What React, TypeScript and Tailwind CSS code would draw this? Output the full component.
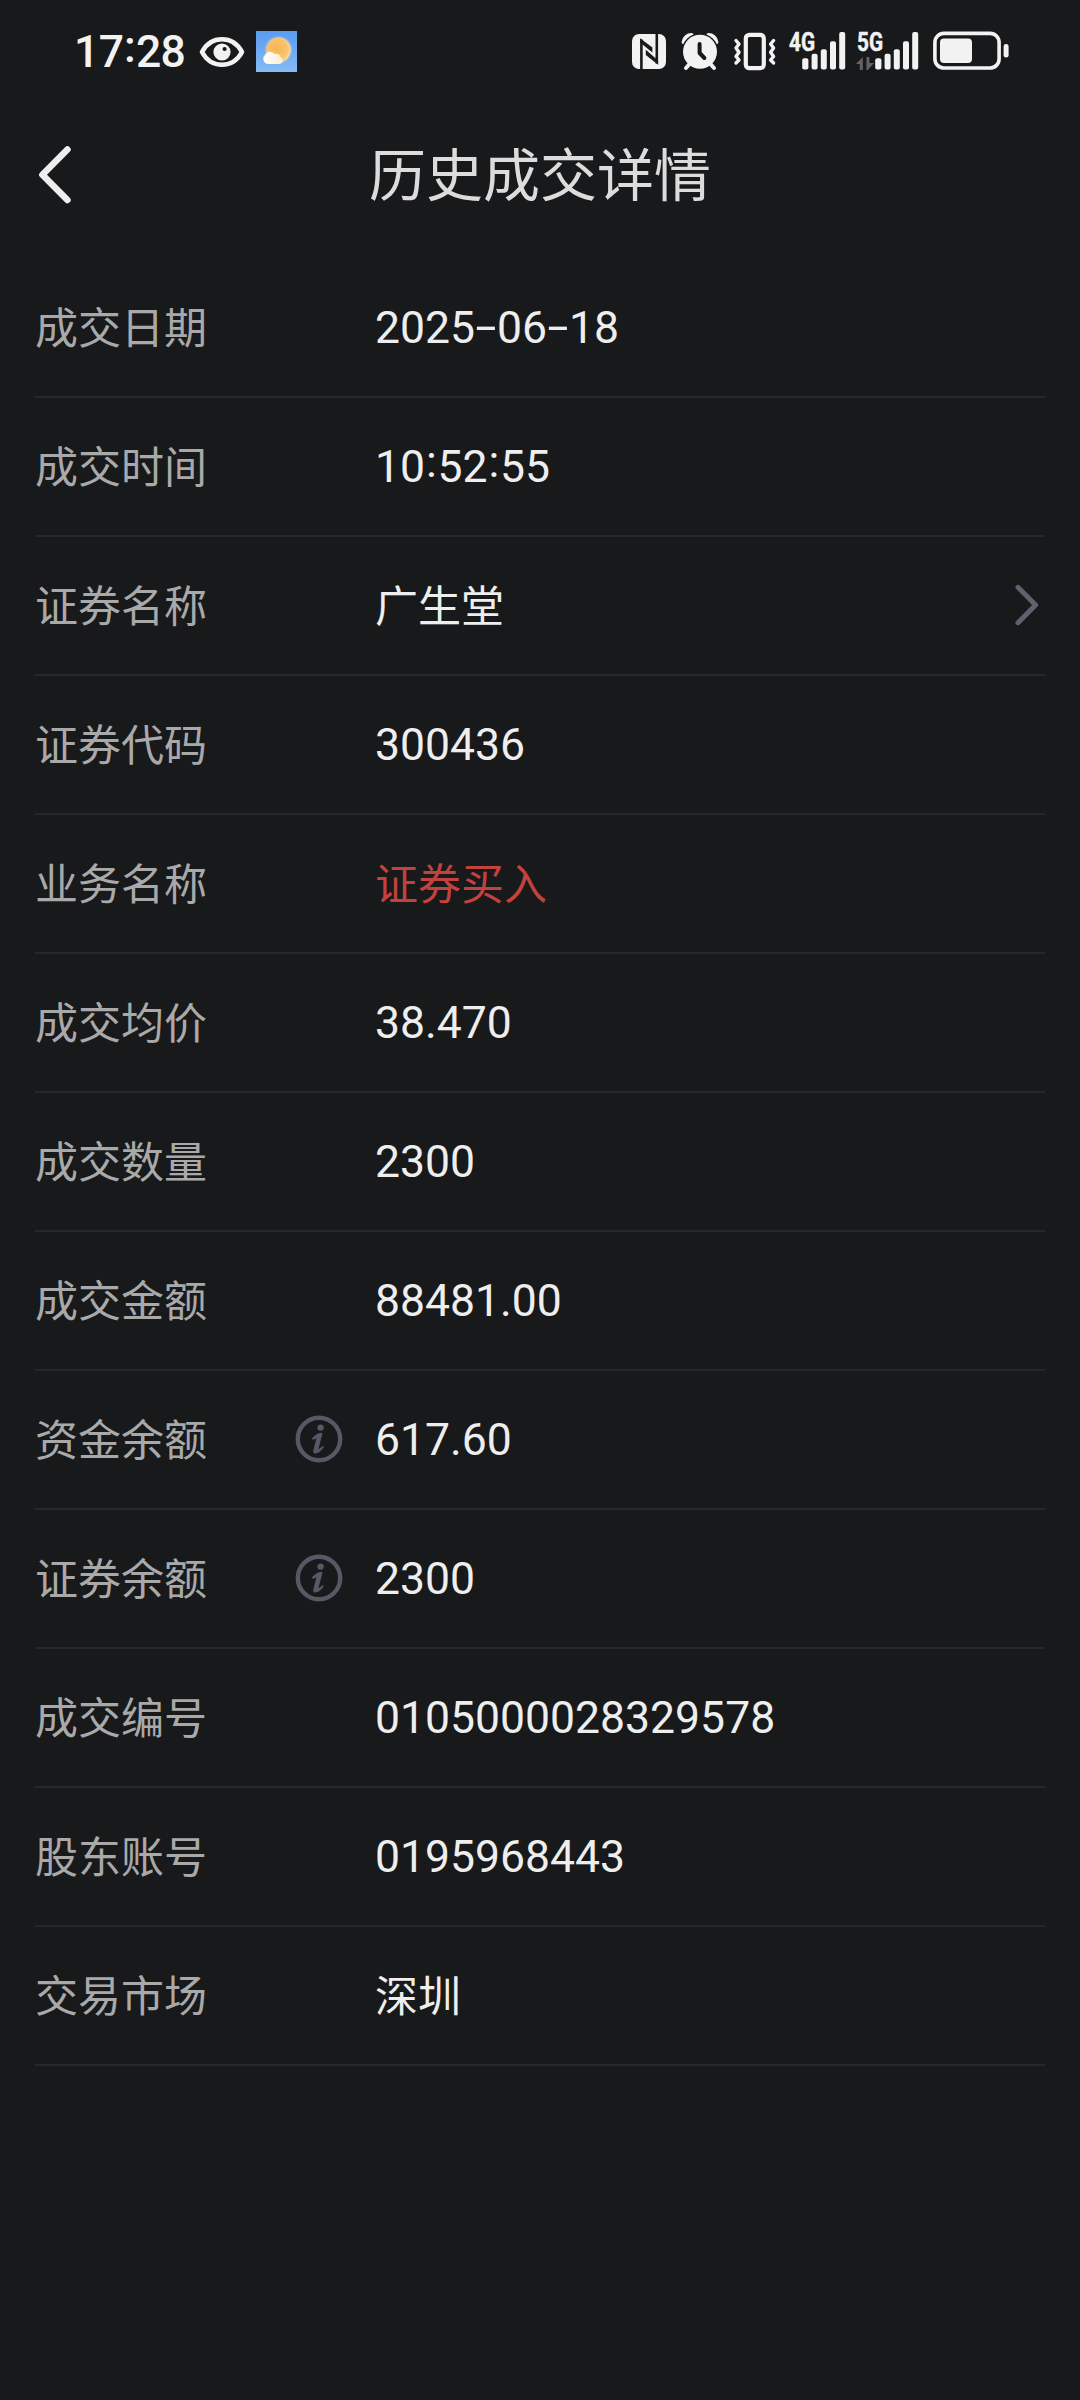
import { Fragment } from "react";
import clsx from "clsx";

type Row = {
  label: string;
  value: string;
  info?: boolean;
  link?: boolean;
  tone?: "buy";
};

const ROWS: Row[] = [
  { label: "成交日期", value: "2025-06-18" },
  { label: "成交时间", value: "10:52:55" },
  { label: "证券名称", value: "广生堂", link: true },
  { label: "证券代码", value: "300436" },
  { label: "业务名称", value: "证券买入", tone: "buy" },
  { label: "成交均价", value: "38.470" },
  { label: "成交数量", value: "2300" },
  { label: "成交金额", value: "88481.00" },
  { label: "资金余额", value: "617.60", info: true },
  { label: "证券余额", value: "2300", info: true },
  { label: "成交编号", value: "0105000028329578" },
  { label: "股东账号", value: "0195968443" },
  { label: "交易市场", value: "深圳" },
];

// Dashes are drawn wider and colons raised to the middle of the digits.
function Figures({ text }: { text: string }) {
  return (
    <>
      {text.split(/([-:])/).map((part, i) => {
        if (part === "-") {
          return (
            <span key={i} className="inline-block w-[22px] -translate-y-px scale-x-[1.7] text-center">
              -
            </span>
          );
        }
        if (part === ":") {
          return (
            <span key={i} className="inline-block w-[12.5px] -translate-y-[5px] text-center">
              :
            </span>
          );
        }
        return <Fragment key={i}>{part}</Fragment>;
      })}
    </>
  );
}

function EyeIcon() {
  return (
    <svg className="h-[44px] w-[46px]" viewBox="0 0 46 44" fill="none">
      <path
        d="M3 23 C7 15.5 14 10.3 23 10.3 C32 10.3 39 15.5 43 23 C39 30.5 32 35.7 23 35.7 C14 35.7 7 30.5 3 23 Z"
        stroke="#f2f2f2"
        strokeWidth="4.6"
        strokeLinejoin="round"
      />
      <circle cx="23" cy="23" r="8.6" fill="#f2f2f2" />
      <circle cx="25.6" cy="20" r="2.1" fill="#18191b" />
    </svg>
  );
}

function WeatherIcon() {
  return (
    <svg className="h-[41px] w-[41px]" viewBox="0 0 41 41">
      <defs>
        <linearGradient id="sky" x1="0" y1="0" x2="0" y2="1">
          <stop offset="0" stopColor="#5b9cf0" />
          <stop offset="1" stopColor="#86baf4" />
        </linearGradient>
        <radialGradient id="sun" cx="0.4" cy="0.45" r="0.65">
          <stop offset="0" stopColor="#f6b455" />
          <stop offset="0.7" stopColor="#fbc46c" />
          <stop offset="1" stopColor="#fde3a4" />
        </radialGradient>
        <linearGradient id="cloud" x1="0" y1="0" x2="1" y2="0">
          <stop offset="0" stopColor="#ffffff" />
          <stop offset="1" stopColor="#fdecd2" />
        </linearGradient>
      </defs>
      <rect width="41" height="41" fill="url(#sky)" />
      <circle cx="22.5" cy="18.8" r="13.4" fill="#fde9b8" opacity="0.35" />
      <circle cx="22.5" cy="18.8" r="12.2" fill="url(#sun)" />
      <path
        d="M12.5 33 A5.2 5.2 0 0 1 9 24 A5.6 5.6 0 0 1 18.5 23 A5.2 5.2 0 0 1 25 26.4 A3.5 3.5 0 0 1 23.5 33 Z"
        fill="url(#cloud)"
      />
    </svg>
  );
}

function NfcIcon() {
  return (
    <svg className="h-[44px] w-[34px]" viewBox="0 0 34 44">
      <rect y="5" width="34" height="35" rx="7" fill="#f2f2f2" />
      <path d="M9.4 40.5 V10.5" stroke="#18191b" strokeWidth="2.6" />
      <path d="M24.8 4.5 V34.5" stroke="#18191b" strokeWidth="2.6" />
      <path d="M8.1 9.2 L20.4 18.4 V23.6 L8.1 13.6 Z" fill="#18191b" />
      <path d="M26.1 35.8 L13.8 26 V20.8 L26.1 31.4 Z" fill="#18191b" />
    </svg>
  );
}

function AlarmIcon() {
  return (
    <svg className="h-[44px] w-[38px]" viewBox="0 0 38 44" fill="none" strokeLinecap="round">
      <path d="M2.8 13 C3.4 9 6.5 6.2 10.5 6.2" stroke="#f2f2f2" strokeWidth="4.4" />
      <path d="M35.2 13 C34.6 9 31.5 6.2 27.5 6.2" stroke="#f2f2f2" strokeWidth="4.4" />
      <circle cx="19" cy="22.8" r="18.4" fill="#18191b" />
      <path d="M8.5 35 L5 39 M29.5 35 L33 39" stroke="#f2f2f2" strokeWidth="4" />
      <circle cx="19" cy="22.8" r="17" fill="#f2f2f2" />
      <path d="M18.6 15 V24 L23.4 29" stroke="#18191b" strokeWidth="4" strokeLinejoin="round" />
    </svg>
  );
}

function VibrateIcon() {
  return (
    <svg
      className="h-[44px] w-[44px]"
      viewBox="0 0 44 44"
      fill="none"
      stroke="#f2f2f2"
      strokeLinecap="round"
      strokeLinejoin="round"
    >
      <rect x="12.8" y="5.8" width="18" height="33.4" rx="3.6" strokeWidth="4.2" />
      <path d="M3 11.5 L6 15 L3 19 L6 23.2 L3 27.4 L6 31 L3 34" strokeWidth="3.4" />
      <path d="M40.6 11.5 L37.6 15 L40.6 19 L37.6 23.2 L40.6 27.4 L37.6 31 L40.6 34" strokeWidth="3.4" />
    </svg>
  );
}

function SignalBars() {
  return (
    <>
      <rect x="0.2" y="29.2" width="6.2" height="11.3" rx="2" />
      <rect x="9.6" y="24.8" width="6" height="15.7" rx="2" />
      <rect x="18.8" y="20.2" width="6" height="20.3" rx="2" />
      <rect x="28" y="12.2" width="6" height="28.3" rx="2" />
      <rect x="37.2" y="3" width="6" height="37.5" rx="2" />
    </>
  );
}

function NetworkLabel({ children }: { children: string }) {
  return (
    <text
      x="1"
      y="21.6"
      className="font-['Roboto',sans-serif] text-[25.5px] font-bold"
      stroke="#f2f2f2"
      strokeWidth="0.5"
      textLength="26"
      lengthAdjust="spacingAndGlyphs"
    >
      {children}
    </text>
  );
}

function Signal4G() {
  return (
    <svg className="h-[64px] w-[59px]" viewBox="0 -10 59 64" fill="#f2f2f2">
      <NetworkLabel>4G</NetworkLabel>
      <g transform="translate(14 0)">
        <SignalBars />
      </g>
    </svg>
  );
}

function Signal5G() {
  return (
    <svg className="h-[64px] w-[64px]" viewBox="0 -10 64 64" fill="#f2f2f2">
      <NetworkLabel>5G</NetworkLabel>
      <path d="M0 35 L6.8 28 V41 H3.8 V35 Z M10.4 28 H13.4 V34 H18 L11.8 41 H10.4 Z" fill="#626365" />
      <g transform="translate(19 0)">
        <SignalBars />
      </g>
    </svg>
  );
}

function BatteryIcon() {
  return (
    <svg className="h-[44px] w-[76px]" viewBox="0 0 76 44">
      <rect x="1.9" y="4.4" width="64.2" height="34.6" rx="9" fill="none" stroke="#f2f2f2" strokeWidth="3.6" />
      <rect x="7" y="9.4" width="32" height="24.6" rx="4" fill="#f2f2f2" />
      <rect x="70.6" y="15" width="5" height="13.6" rx="2.4" fill="#f2f2f2" />
    </svg>
  );
}

function InfoIcon() {
  return (
    <svg className="mb-px h-[48px] w-[48px]" viewBox="0 0 48 48" fill="none">
      <circle cx="24" cy="24" r="21.2" stroke="#545966" strokeWidth="4.4" />
      <circle cx="25.6" cy="12.6" r="3.2" fill="#545966" />
      <path
        d="M17 23.2 C19.6 20.4 22.8 18.2 26.4 17.8 C27.8 17.8 27.4 19.2 27 20.6 L23.4 34.2 C25 33.4 26.6 31.8 28.2 31 C29 31.4 28.8 32.2 28.4 32.8 C26.4 35.8 23.4 38.4 20.2 38.6 C18 38.4 18 36.2 18.6 34.2 L21.4 23.6 C20.2 24 19 25 17.6 24.8 Z"
        fill="#545966"
      />
    </svg>
  );
}

function StatusBar() {
  return (
    <div className="flex h-[102px] items-center justify-between pr-[71px] pl-[74px]">
      <div className="flex items-center">
        <div className="w-[125px] pt-[3px] text-[44.5px] leading-none font-medium tracking-[-0.6px] whitespace-nowrap text-[#f2f2f2]">
          <Figures text="17:28" />
        </div>
        <EyeIcon />
        <div className="ml-[11px]">
          <WeatherIcon />
        </div>
      </div>
      <div className="flex items-center">
        <NfcIcon />
        <div className="ml-[15px] flex">
          <AlarmIcon />
        </div>
        <div className="ml-[14px] flex">
          <VibrateIcon />
        </div>
        <div className="ml-[11px] flex">
          <Signal4G />
        </div>
        <div className="ml-[9px] flex">
          <Signal5G />
        </div>
        <div className="ml-[13px] flex">
          <BatteryIcon />
        </div>
      </div>
    </div>
  );
}

function DetailRow({ label, value, info, link, tone }: Row) {
  const numeric = /^[\d.:-]+$/.test(value);
  return (
    <li className="flex h-[139px] items-center border-b-2 border-[#26272a]">
      <div className="flex w-[340px] items-center justify-between pr-[32px]">
        <span className="pt-[4px] text-[43px] leading-none text-[#a9a9a9]">{label}</span>
        {info && <InfoIcon />}
      </div>
      <span
        className={clsx(
          "flex-1 leading-none whitespace-nowrap",
          numeric ? "pt-[2px] text-[44.5px]" : "pt-[4px] text-[43px]",
          tone === "buy" ? "text-[#c4423e]" : "text-[#eeeeee]",
        )}
      >
        <Figures text={value} />
      </span>
      {link && (
        <svg className="mr-[5px] mb-[2px] h-[44px] w-[26px]" viewBox="0 0 26 44" fill="none">
          <path
            d="M4 4.3 L21.6 22 L4 39.7"
            stroke="#5f616d"
            strokeWidth="5"
            strokeLinecap="round"
            strokeLinejoin="round"
          />
        </svg>
      )}
    </li>
  );
}

export default function App() {
  return (
    <div className="min-h-[2400px] w-[1080px] bg-[#18191b] font-['Roboto','Noto_Sans_CJK_SC',sans-serif]">
      <StatusBar />
      <header className="grid h-[146px] grid-cols-[1fr_auto_1fr] items-center">
        <svg className="ml-[36px] h-[60px] w-[36px]" viewBox="0 0 36 60" fill="none">
          <path
            d="M31.4 4.5 L6.4 29.7 L31.4 55"
            stroke="#eeeeee"
            strokeWidth="6.6"
            strokeLinecap="round"
            strokeLinejoin="round"
          />
        </svg>
        <h1 className="pt-[3px] text-[57px] leading-none text-[#dcdcdc]">历史成交详情</h1>
      </header>
      <ul className="px-[35px] pt-[11px]">
        {ROWS.map((row) => (
          <DetailRow key={row.label} {...row} />
        ))}
      </ul>
    </div>
  );
}
